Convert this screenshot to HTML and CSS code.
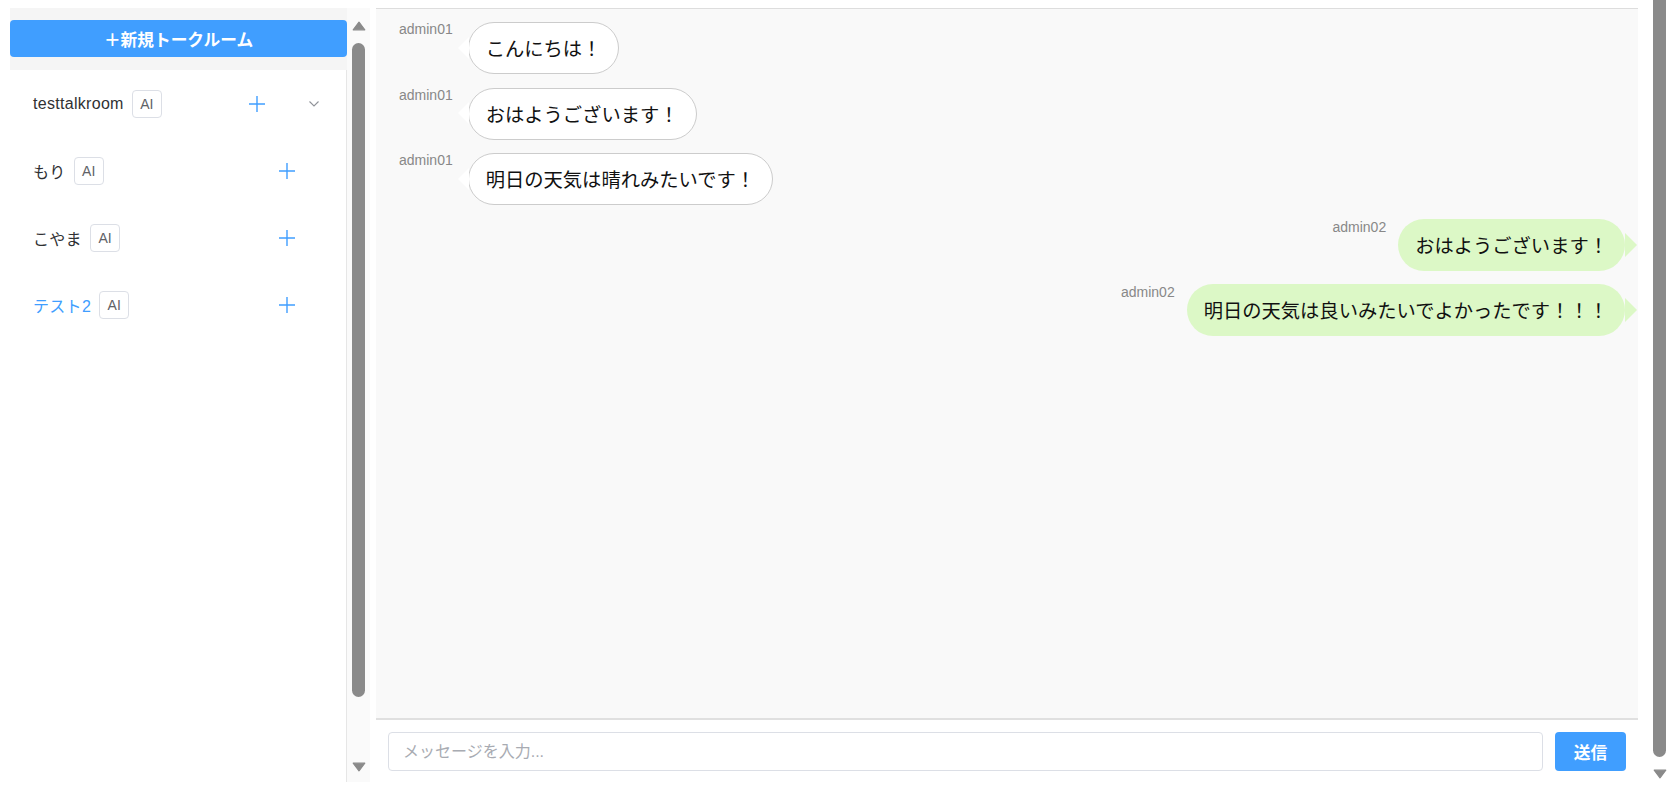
FILE: index.html
```html
<!DOCTYPE html>
<html lang="ja">
<head>
<meta charset="utf-8">
<title>トークルーム</title>
<link rel="stylesheet" href="styles.css">
</head>
<body>
<div class="app">
  <aside class="sidebar">
    <div class="sidebar-main">
      <div class="sidebar-head">
        <button class="new-room" type="button">＋新規トークルーム</button>
      </div>
      <ul class="rooms">
        <li class="room has-sub">
          <span class="room-name">testtalkroom</span>
          <span class="badge">AI</span>
          <svg class="plus" viewBox="0 0 18 18"><path d="M9 1v16M1 9h16"/></svg>
          <svg class="chev" viewBox="0 0 10 6"><path d="M0.5 0.5L5 5l4.5-4.5"/></svg>
        </li>
        <li class="room">
          <span class="room-name">もり</span>
          <span class="badge">AI</span>
          <svg class="plus" viewBox="0 0 18 18"><path d="M9 1v16M1 9h16"/></svg>
        </li>
        <li class="room">
          <span class="room-name">こやま</span>
          <span class="badge">AI</span>
          <svg class="plus" viewBox="0 0 18 18"><path d="M9 1v16M1 9h16"/></svg>
        </li>
        <li class="room active">
          <span class="room-name">テスト2</span>
          <span class="badge">AI</span>
          <svg class="plus" viewBox="0 0 18 18"><path d="M9 1v16M1 9h16"/></svg>
        </li>
      </ul>
    </div>
    <div class="vscroll">
      <svg class="sb-arrow" viewBox="0 0 14 10"><path d="M7 1.2L12.8 8.8H1.2z"/></svg>
      <div class="sb-thumb"></div>
      <svg class="sb-arrow sb-down" viewBox="0 0 14 10"><path d="M7 8.8L12.8 1.2H1.2z"/></svg>
    </div>
  </aside>
  <main class="chat">
    <div class="messages">
      <div class="msg left"><span class="who">admin01</span><div class="bubble">こんにちは！</div></div>
      <div class="msg left"><span class="who">admin01</span><div class="bubble">おはようございます！</div></div>
      <div class="msg left"><span class="who">admin01</span><div class="bubble">明日の天気は晴れみたいです！</div></div>
      <div class="msg right"><span class="who">admin02</span><div class="bubble">おはようございます！</div></div>
      <div class="msg right"><span class="who">admin02</span><div class="bubble">明日の天気は良いみたいでよかったです！！！</div></div>
    </div>
    <form class="composer" onsubmit="return false">
      <input class="composer-input" type="text" placeholder="メッセージを入力...">
      <button class="send" type="submit">送信</button>
    </form>
  </main>
</div>
<div class="page-scroll">
  <div class="ps-thumb"></div>
  <svg class="ps-arrow" viewBox="0 0 14 10"><path d="M7 8.8L12.8 1.2H1.2z"/></svg>
</div>
</body>
</html>
```
FILE: styles.css
```css
body {
  margin: 8px;
  font-family: "Liberation Sans", "Noto Sans CJK JP", sans-serif;
  color: #303133;
  background: #ffffff;
}

.app {
  display: flex;
  height: 774px;
}

/* ---------- sidebar ---------- */
.sidebar {
  flex: none;
  display: flex;
  margin-left: 2px;
  height: 774px;
  overflow: hidden;
}
.sidebar-main {
  width: 337px;
  display: flex;
  flex-direction: column;
}
.sidebar-head {
  flex: none;
  background: #f5f5f5;
  padding: 12px 0 13px;
}
.new-room {
  display: block;
  width: 100%;
  height: 37px;
  border: 0;
  border-radius: 4px;
  background: #409eff;
  color: #ffffff;
  font-family: "Liberation Sans", "Noto Sans CJK JP", sans-serif;
  font-size: 16.7px;
  font-weight: bold;
  cursor: pointer;
}

.rooms {
  flex: 1;
  list-style: none;
  margin: 0;
  padding: 0;
  border-right: 1px solid #e6e6e6;
}
.room {
  display: flex;
  align-items: center;
  height: 67px;
  padding: 0 50px 0 23px;
  font-size: 16px;
  color: #303133;
}
.room-name {
  letter-spacing: 0.3px;
}
.room.has-sub {
  padding-right: 27px;
}
.room.active .room-name {
  color: #409eff;
}
.badge {
  display: inline-flex;
  align-items: center;
  box-sizing: border-box;
  height: 28px;
  margin-left: 8px;
  padding: 0 7.5px;
  border: 1px solid #dcdfe6;
  border-radius: 4px;
  font-size: 14px;
  color: #606266;
  background: #ffffff;
}
.plus {
  width: 18px;
  height: 18px;
  margin-left: auto;
  fill: none;
  stroke: #409eff;
  stroke-width: 1.4;
}
.chev {
  width: 10px;
  height: 6px;
  margin-left: 43px;
  fill: none;
  stroke: #909399;
  stroke-width: 1.1;
}

/* drawn scrollbar of the room list */
.vscroll {
  width: 23px;
  background: #fafafa;
  display: flex;
  flex-direction: column;
  align-items: center;
  padding: 13px 0 10px;
  box-sizing: border-box;
}
.sb-arrow {
  flex: none;
  width: 14px;
  height: 10px;
  fill: #8a8a8a;
  stroke: #8a8a8a;
  stroke-width: 1.2;
  stroke-linejoin: round;
}
.sb-thumb {
  flex: none;
  width: 13px;
  height: 654px;
  margin: 12px 0 auto;
  border-radius: 6.5px;
  background: #8a8a8a;
}

/* ---------- chat ---------- */
.chat {
  flex: none;
  width: 1262px;
  margin-left: 6px;
  display: flex;
  flex-direction: column;
  border-top: 1px solid #dddddd;
}
.messages {
  flex: 1;
  min-height: 0;
  overflow: hidden;
  background: #f9f9f9;
  border-bottom: 2px solid #e0e0e0;
  padding-top: 13px;
  display: flex;
  flex-direction: column;
  gap: 13.5px;
}
.msg {
  display: flex;
  align-items: flex-start;
}
.msg.left {
  padding-left: 23px;
}
.msg.right {
  justify-content: flex-end;
  padding-right: 13px;
}
.who {
  color: #888888;
  font-size: 14px;
  line-height: 14px;
  white-space: nowrap;
}
.left .who {
  margin-right: 15px;
}
.right .who {
  margin-top: 1px;
  margin-right: 12px;
}
.bubble {
  position: relative;
  line-height: 26px;
  border-radius: 26px;
  color: #111111;
  font-family: "Noto Sans CJK JP", sans-serif;
  font-size: 19.3px;
  white-space: nowrap;
}
.left .bubble {
  background: #ffffff;
  border: 1px solid #cccccc;
  padding: 12px 17px;
}
.left .bubble::before {
  content: "";
  position: absolute;
  left: -11px;
  top: 50%;
  margin-top: -11.5px;
  border-style: solid;
  border-width: 11.5px 11px 11.5px 0;
  border-color: transparent #ffffff transparent transparent;
}
.right .bubble {
  background: #dcf8c6;
  padding: 13px 17px;
}
.right .bubble::after {
  content: "";
  position: absolute;
  right: -12px;
  top: 50%;
  margin-top: -12px;
  border-style: solid;
  border-width: 12px 0 12px 12px;
  border-color: transparent transparent transparent #dcf8c6;
}

.composer {
  flex: none;
  display: flex;
  gap: 12px;
  margin: 0;
  padding: 12px 12px 11px;
  background: #ffffff;
}
.composer-input {
  flex: 1;
  height: 39px;
  box-sizing: border-box;
  padding: 0 14px;
  border: 1px solid #dcdfe6;
  border-radius: 4px;
  font-family: "Liberation Sans", "Noto Sans CJK JP", sans-serif;
  font-size: 16px;
  color: #303133;
  outline: none;
}
.composer-input::placeholder {
  color: #a8abb2;
}
.send {
  flex: none;
  width: 71px;
  height: 39px;
  border: 0;
  border-radius: 4px;
  background: #409eff;
  color: #ffffff;
  font-family: "Liberation Sans", "Noto Sans CJK JP", sans-serif;
  font-size: 16.7px;
  font-weight: bold;
  cursor: pointer;
}

/* drawn window scrollbar, over the page edge */
.page-scroll {
  position: fixed;
  top: 0;
  right: 0;
  width: 15px;
  height: 100%;
  display: flex;
  flex-direction: column;
  align-items: flex-start;
}
.ps-thumb {
  flex: none;
  width: 13px;
  height: 757px;
  border-radius: 0 0 6.5px 6.5px;
  background: #8a8a8a;
}
.ps-arrow {
  flex: none;
  width: 14px;
  height: 10px;
  margin-top: 12px;
  fill: #8a8a8a;
  stroke: #8a8a8a;
  stroke-width: 1.2;
  stroke-linejoin: round;
}
```
